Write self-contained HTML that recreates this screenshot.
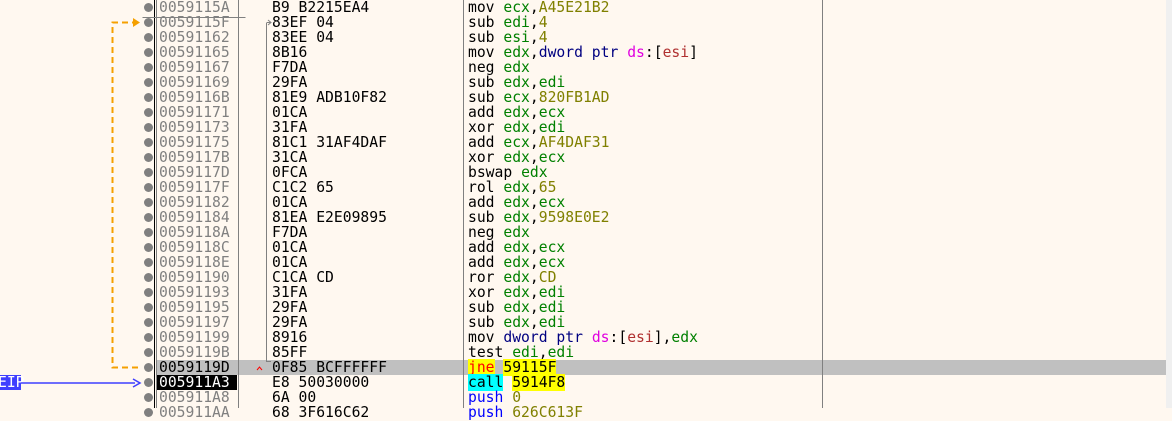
<!DOCTYPE html><html><head><style>
body{margin:0;width:1172px;height:408px;overflow:hidden;background:#fff8f0;position:relative;font-family:"DejaVu Sans Mono","Liberation Mono",monospace;font-size:14.7px}
.r{position:absolute;left:0;height:15px;line-height:15px;white-space:pre;width:1166px}
.a{position:absolute;left:159px;color:#808080}
.b{position:absolute;left:272px;color:#000}
.d{position:absolute;left:468px;color:#000}
.dot{position:absolute;left:144px;top:3px;width:9px;height:9px;border-radius:50%;background:#808080}
.g{color:#008000}.n{color:#808000}.m{color:#e000e0}.p{color:#000080}.e{color:#b03030}.bl{color:#0000ff}
.v{position:absolute;top:0;height:408px;width:1px;background:#808080}
</style></head><body>
<div style="position:absolute;left:1166px;top:0;width:6px;height:408px;background:#f0f0f0"></div>
<div style="position:absolute;left:156px;top:360px;width:1010px;height:15px;background:#c0c0c0"></div>
<div style="position:absolute;left:156px;top:375px;width:81px;height:15px;background:#000"></div>
<div class="v" style="left:154px;background:#000"></div>
<div class="v" style="left:156px"></div>
<div class="v" style="left:238px"></div>
<div class="v" style="left:463px"></div>
<div class="v" style="left:822px"></div>
<div id="rows"></div>
<script>
var R=[["0059115A","B9 B2215EA4",'mov <span class="g">ecx</span>,<span class="n">A45E21B2</span>'],
["0059115F","83EF 04",'sub <span class="g">edi</span>,<span class="n">4</span>'],
["00591162","83EE 04",'sub <span class="g">esi</span>,<span class="n">4</span>'],
["00591165","8B16",'mov <span class="g">edx</span>,<span class="p">dword ptr</span> <span class="m">ds</span>:[<span class="e">esi</span>]'],
["00591167","F7DA",'neg <span class="g">edx</span>'],
["00591169","29FA",'sub <span class="g">edx</span>,<span class="g">edi</span>'],
["0059116B","81E9 ADB10F82",'sub <span class="g">ecx</span>,<span class="n">820FB1AD</span>'],
["00591171","01CA",'add <span class="g">edx</span>,<span class="g">ecx</span>'],
["00591173","31FA",'xor <span class="g">edx</span>,<span class="g">edi</span>'],
["00591175","81C1 31AF4DAF",'add <span class="g">ecx</span>,<span class="n">AF4DAF31</span>'],
["0059117B","31CA",'xor <span class="g">edx</span>,<span class="g">ecx</span>'],
["0059117D","0FCA",'bswap <span class="g">edx</span>'],
["0059117F","C1C2 65",'rol <span class="g">edx</span>,<span class="n">65</span>'],
["00591182","01CA",'add <span class="g">edx</span>,<span class="g">ecx</span>'],
["00591184","81EA E2E09895",'sub <span class="g">edx</span>,<span class="n">9598E0E2</span>'],
["0059118A","F7DA",'neg <span class="g">edx</span>'],
["0059118C","01CA",'add <span class="g">edx</span>,<span class="g">ecx</span>'],
["0059118E","01CA",'add <span class="g">edx</span>,<span class="g">ecx</span>'],
["00591190","C1CA CD",'ror <span class="g">edx</span>,<span class="n">CD</span>'],
["00591193","31FA",'xor <span class="g">edx</span>,<span class="g">edi</span>'],
["00591195","29FA",'sub <span class="g">edx</span>,<span class="g">edi</span>'],
["00591197","29FA",'sub <span class="g">edx</span>,<span class="g">edi</span>'],
["00591199","8916",'mov <span class="p">dword ptr</span> <span class="m">ds</span>:[<span class="e">esi</span>],<span class="g">edx</span>'],
["0059119B","85FF",'test <span class="g">edi</span>,<span class="g">edi</span>'],
["0059119D","0F85 BCFFFFFF",'<span style="background:#ff0;color:#f00">jne</span> <span style="background:#ff0;color:#000">59115F</span>'],
["005911A3","E8 50030000",'<span style="background:#0ff;color:#000">call</span> <span style="background:#ff0;color:#000">5914F8</span>'],
["005911A8","6A 00",'<span class="bl">push</span> <span class="n">0</span>'],
["005911AA","68 3F616C62",'<span class="bl">push</span> <span class="n">626C613F</span>']];
var h='';R.forEach(function(x,i){var ac=i==24?'color:#000':i==25?'color:#fff':'';
h+='<div class="r" style="top:'+(i*15)+'px"><div class="dot"></div><span class="a" style="'+ac+'">'+x[0]+'</span><span class="b">'+x[1]+'</span><span class="d">'+x[2]+'</span></div>';});
document.getElementById('rows').innerHTML=h;
</script>
<svg width="1172" height="408" style="position:absolute;left:0;top:0">
<path d="M142.5 17.5H245.5M238.5 0V17.5" stroke="#808080" fill="none"/>
<path d="M266.5 23V361.5H271" stroke="#808080" fill="none"/>
<path d="M266.5 22.5H271M268 20l3 2.5-3 2.5" stroke="#808080" fill="none"/>
<path d="M257 370l2.5-3 2.5 3" stroke="#f00" fill="none"/>
<path d="M138 22.5H112.5V367.5H140" stroke="#f5a000" stroke-width="2" stroke-dasharray="6,4" fill="none"/>
<path d="M133 18l7 4.5-7 4.5z" fill="#f5a000"/>
<rect x="0" y="375" width="21" height="15" fill="#3f3fff"/>
<text x="-2" y="387" fill="#fff" font-family="DejaVu Sans Mono" font-size="14.7">EIP</text>
<path d="M21 383H135" stroke="#3f3fff" stroke-width="1.5"/>
<path d="M133 379l7 4-7 4" stroke="#3f3fff" stroke-width="1.5" fill="none"/>
</svg>
</body></html>
